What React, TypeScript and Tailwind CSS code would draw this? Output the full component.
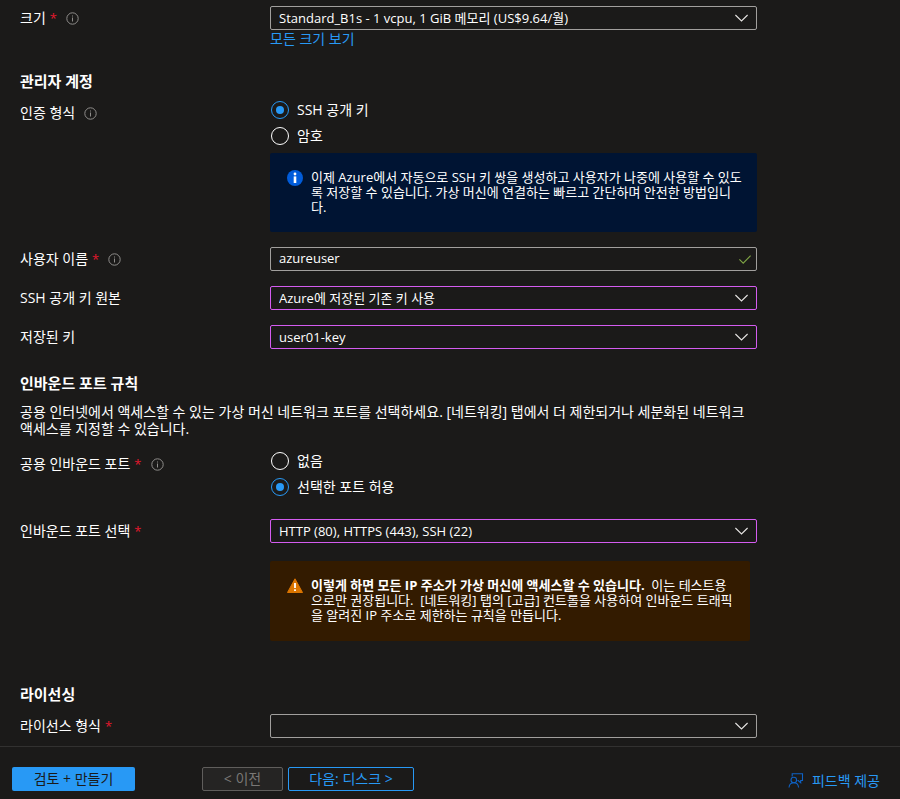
import { useState } from 'react';
import type { ReactNode } from 'react';
import clsx from 'clsx';

function InfoIcon() {
  return (
    <svg viewBox="0 0 13 13" className="mt-1 h-[13px] w-[13px] shrink-0" fill="none" stroke="#8f8d8b" aria-hidden="true">
      <circle cx="6.5" cy="6.5" r="5.7" />
      <path d="M6.5 5.5v4M6.5 3.5v1" />
    </svg>
  );
}

function ChevronIcon() {
  return (
    <svg
      viewBox="0 0 14 8"
      className="pointer-events-none absolute top-2 right-2 h-2 w-3.5"
      fill="none"
      stroke="#e6e4e2"
      strokeWidth="1.1"
      aria-hidden="true"
    >
      <path d="M.4 1 6.5 7 12.6 1" />
    </svg>
  );
}

function LabelContent({ text, required, info }: { text: string; required?: boolean; info?: boolean }) {
  return (
    <>
      <span>{text}</span>
      {required && <span className="ml-1 text-[13px] text-[#e3182d]">*</span>}
      {info && (
        <span className="ml-[9px]">
          <InfoIcon />
        </span>
      )}
    </>
  );
}

type FieldProps = {
  id: string;
  label: string;
  required?: boolean;
  info?: boolean;
  children: ReactNode;
};

function Field({ id, label, required, info, children }: FieldProps) {
  return (
    <div className="flex">
      <label htmlFor={id} className="flex w-[250px] shrink-0 pt-0.5 leading-5">
        <LabelContent text={label} required={required} info={info} />
      </label>
      <div className="min-w-0 flex-1">{children}</div>
    </div>
  );
}

function Select({ id, options, changed }: { id: string; options: string[]; changed?: boolean }) {
  return (
    <div className="relative">
      <select
        id={id}
        className={clsx(
          'block h-6 w-full appearance-none rounded-[2px] border bg-[#1b1a19] pt-0.5 pr-8 pl-2 text-[13px] text-white focus:outline-none',
          changed ? 'border-[#d45cf0]' : 'border-[#a19f9d]'
        )}
      >
        {options.map((option) => (
          <option key={option}>{option}</option>
        ))}
      </select>
      <ChevronIcon />
    </div>
  );
}

type RadioFieldProps = {
  name: string;
  label: string;
  required?: boolean;
  info?: boolean;
  options: string[];
  initial: string;
};

function RadioField({ name, label, required, info, options, initial }: RadioFieldProps) {
  const [value, setValue] = useState(initial);

  return (
    <div role="radiogroup" aria-labelledby={`${name}-label`} className="flex">
      <div id={`${name}-label`} className="flex w-[250px] shrink-0 pt-[3px] leading-5">
        <LabelContent text={label} required={required} info={info} />
      </div>
      <div className="flex flex-col gap-1.5 pl-px">
        {options.map((option) => (
          <label key={option} className="flex h-5 items-center gap-2">
            <input
              type="radio"
              name={name}
              checked={value === option}
              onChange={() => setValue(option)}
              className="m-0 grid h-[18px] w-[18px] appearance-none place-items-center rounded-full border border-white before:h-2 before:w-2 before:rounded-full checked:border-[#2899f5] checked:before:bg-[#2899f5]"
            />
            <span className="leading-5">{option}</span>
          </label>
        ))}
      </div>
    </div>
  );
}

function SectionTitle({ children }: { children: ReactNode }) {
  return <h2 className="text-[15px] leading-5 font-bold">{children}</h2>;
}

export default function App() {
  return (
    <div className="flex min-h-screen flex-col bg-[#1b1a19] font-['Open_Sans','Noto_Sans_CJK_KR',sans-serif] text-[14px] text-white">
      <main className="w-full max-w-[777px] grow px-5 pt-1.5 pb-2">
        <Field id="size" label="크기" required info>
          <Select id="size" options={['Standard_B1s - 1 vcpu, 1 GiB 메모리 (US$9.64/월)']} />
          <a href="#sizes" className="block leading-[18px] text-[#2899f5]">
            모든 크기 보기
          </a>
        </Field>

        <section className="pt-[23px]">
          <SectionTitle>관리자 계정</SectionTitle>
          <div className="pt-[9px]">
            <RadioField name="auth" label="인증 형식" info options={['SSH 공개 키', '암호']} initial="SSH 공개 키" />
          </div>

          <div className="mt-[7px] ml-[250px] flex gap-2 rounded-[2px] bg-[#001433] pt-[17px] pr-3 pb-[15px] pl-[17px]">
            <svg viewBox="0 0 16 16" className="h-4 w-4 shrink-0" aria-hidden="true">
              <circle cx="8" cy="8" r="8" fill="#015cda" />
              <circle cx="8" cy="4" r="1.4" fill="#fff" />
              <path d="M6.7 6.4h2.6V13H6.7z" fill="#fff" />
            </svg>
            <p className="min-h-[47px] text-[13px] leading-[15px]">
              이제 Azure에서 자동으로 SSH 키 쌍을 생성하고 사용자가 나중에 사용할 수 있도록 저장할 수 있습니다. 가상
              머신에 연결하는 빠르고 간단하며 안전한 방법입니다.
            </p>
          </div>

          <div className="flex flex-col gap-[15px] pt-[15px]">
            <Field id="username" label="사용자 이름" required info>
              <div className="relative">
                <input
                  id="username"
                  type="text"
                  defaultValue="azureuser"
                  className="block h-6 w-full rounded-[2px] border border-[#a19f9d] bg-[#1b1a19] pr-8 pb-0.5 pl-2 text-[13px] text-white focus:outline-none"
                />
                <svg
                  viewBox="0 0 12 9"
                  className="pointer-events-none absolute top-2 right-1.5 h-[9px] w-3"
                  fill="none"
                  stroke="#7fa545"
                  strokeWidth="1.1"
                  aria-hidden="true"
                >
                  <path d="M.4 4.4 4.2 8.2 11.6 .7" />
                </svg>
              </div>
            </Field>
            <Field id="key-source" label="SSH 공개 키 원본">
              <Select id="key-source" options={['Azure에 저장된 기존 키 사용']} changed />
            </Field>
            <Field id="stored-key" label="저장된 키">
              <Select id="stored-key" options={['user01-key']} changed />
            </Field>
          </div>
        </section>

        <section className="pt-6">
          <SectionTitle>인바운드 포트 규칙</SectionTitle>
          <p className="pt-2.5 leading-[17px]">
            공용 인터넷에서 액세스할 수 있는 가상 머신 네트워크 포트를 선택하세요. [네트워킹] 탭에서 더 제한되거나
            세분화된 네트워크 액세스를 지정할 수 있습니다.
          </p>
          <div className="pt-3.5">
            <RadioField
              name="inbound"
              label="공용 인바운드 포트"
              required
              info
              options={['없음', '선택한 포트 허용']}
              initial="선택한 포트 허용"
            />
          </div>
          <div className="pt-[22px]">
            <Field id="ports" label="인바운드 포트 선택" required>
              <Select id="ports" options={['HTTP (80), HTTPS (443), SSH (22)']} changed />
            </Field>
          </div>

          <div className="mt-[18px] mr-[7px] ml-[250px] flex gap-2 rounded-[2px] bg-[#331b00] pt-[17px] pr-4 pb-4 pl-[17px]">
            <svg viewBox="0 0 16 16" className="h-4 w-4 shrink-0" aria-hidden="true">
              <path d="M8 .8 15.5 14.5H.5z" fill="#db7500" stroke="#db7500" strokeLinejoin="round" />
              <path d="M7.1 5h1.8v5H7.1zM7.1 11.2h1.8V13H7.1z" fill="#fff" />
            </svg>
            <p className="min-h-[47px] text-[13px] leading-[15px]">
              <strong className="font-bold">이렇게 하면 모든 IP 주소가 가상 머신에 액세스할 수 있습니다.</strong>
              &nbsp; 이는 테스트용으로만 권장됩니다.&nbsp; [네트워킹] 탭의 [고급] 컨트롤을 사용하여 인바운드 트래픽을
              알려진 IP 주소로 제한하는 규칙을 만듭니다.
            </p>
          </div>
        </section>

        <section className="pt-[43px]">
          <SectionTitle>라이선싱</SectionTitle>
          <div className="pt-2.5">
            <Field id="license" label="라이선스 형식" required>
              <Select id="license" options={['']} />
            </Field>
          </div>
        </section>
      </main>

      <footer className="flex h-[53px] shrink-0 items-end border-t border-[#323130] pr-5 pb-2 pl-3">
        <button type="button" className="h-6 w-[123px] rounded-[2px] bg-[#2899f5] leading-5 text-[#1b1a19]">
          검토 + 만들기
        </button>
        <button
          type="button"
          disabled
          className="ml-[67px] h-6 w-[81px] rounded-[2px] border border-[#605e5c] bg-[#252423] leading-5 text-[#797775]"
        >
          &lt; 이전
        </button>
        <button
          type="button"
          className="ml-[5px] h-6 w-[126px] rounded-[2px] border border-[#2899f5] leading-5 text-[#2899f5]"
        >
          다음: 디스크 &gt;
        </button>
        <a href="#feedback" className="ml-auto flex items-center gap-2 leading-5 text-[#2899f5]">
          <svg viewBox="0 0 16 16" className="h-4 w-4" fill="none" stroke="#0f62c4" strokeWidth="1.1" aria-hidden="true">
            <path d="M4.2 3.6V.8h10.3v6.7h-1.8v2.3L10.2 7.5H9.5" />
            <circle cx="5.8" cy="7" r="2.8" />
            <path d="M1 14.5c.3-2.8 2.2-4.7 4.8-4.7s4.5 1.9 4.8 4.7" />
          </svg>
          피드백 제공
        </a>
      </footer>
    </div>
  );
}
